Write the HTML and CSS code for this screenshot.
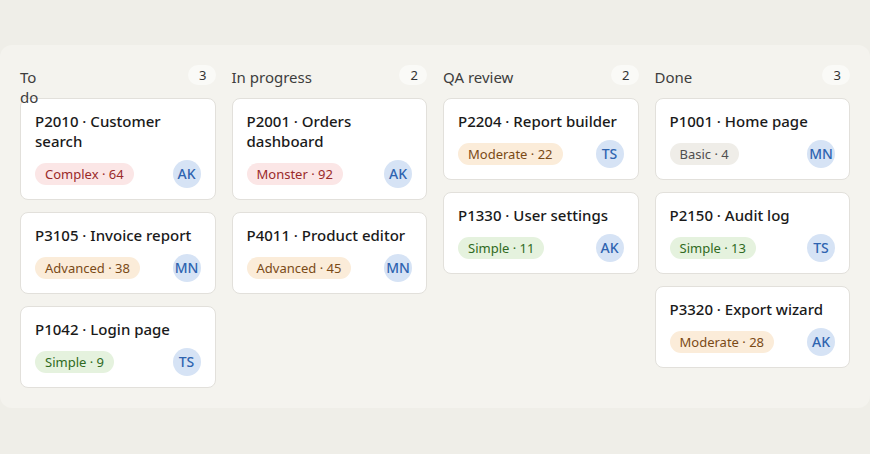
FILE: index.html
```html
<!DOCTYPE html>
<html>
<head>
  <meta name="viewport" content="width=device-width, initial-scale=1">
  <title>Board</title>
  <link rel="stylesheet" href="styles.css">
</head>
<body>
  <div class="board">
    <div class="column">
      <div class="col-head">
        <span class="col-title narrow">To do</span>
        <span class="count">3</span>
      </div>
      <div class="card">
        <div class="card-title">P2010 · Customer search</div>
        <div class="card-foot">
          <span class="tag red">Complex · 64</span>
          <span class="avatar">AK</span>
        </div>
      </div>
      <div class="card">
        <div class="card-title">P3105 · Invoice report</div>
        <div class="card-foot">
          <span class="tag orange">Advanced · 38</span>
          <span class="avatar">MN</span>
        </div>
      </div>
      <div class="card">
        <div class="card-title">P1042 · Login page</div>
        <div class="card-foot">
          <span class="tag green">Simple · 9</span>
          <span class="avatar">TS</span>
        </div>
      </div>
    </div>

    <div class="column">
      <div class="col-head">
        <span class="col-title">In progress</span>
        <span class="count">2</span>
      </div>
      <div class="card">
        <div class="card-title">P2001 · Orders dashboard</div>
        <div class="card-foot">
          <span class="tag red">Monster · 92</span>
          <span class="avatar">AK</span>
        </div>
      </div>
      <div class="card">
        <div class="card-title">P4011 · Product editor</div>
        <div class="card-foot">
          <span class="tag orange">Advanced · 45</span>
          <span class="avatar">MN</span>
        </div>
      </div>
    </div>

    <div class="column">
      <div class="col-head">
        <span class="col-title">QA review</span>
        <span class="count">2</span>
      </div>
      <div class="card">
        <div class="card-title">P2204 · Report builder</div>
        <div class="card-foot">
          <span class="tag orange">Moderate · 22</span>
          <span class="avatar">TS</span>
        </div>
      </div>
      <div class="card">
        <div class="card-title">P1330 · User settings</div>
        <div class="card-foot">
          <span class="tag green">Simple · 11</span>
          <span class="avatar">AK</span>
        </div>
      </div>
    </div>

    <div class="column">
      <div class="col-head">
        <span class="col-title">Done</span>
        <span class="count">3</span>
      </div>
      <div class="card">
        <div class="card-title">P1001 · Home page</div>
        <div class="card-foot">
          <span class="tag grey">Basic · 4</span>
          <span class="avatar">MN</span>
        </div>
      </div>
      <div class="card">
        <div class="card-title">P2150 · Audit log</div>
        <div class="card-foot">
          <span class="tag green">Simple · 13</span>
          <span class="avatar">TS</span>
        </div>
      </div>
      <div class="card">
        <div class="card-title">P3320 · Export wizard</div>
        <div class="card-foot">
          <span class="tag orange">Moderate · 28</span>
          <span class="avatar">AK</span>
        </div>
      </div>
    </div>
  </div>
</body>
</html>
```

FILE: styles.css
```css
html, body {
  height: 100%;
}

body {
  margin: 0;
  padding: 45px 0 0;
  background-color: #efeee8;
  font-family: "Noto Sans", "Open Sans", sans-serif;
  color: #1c1c1c;
  box-sizing: border-box;
}

.board {
  display: grid;
  grid-template-columns: repeat(4, 1fr);
  gap: 16px;
  align-items: start;
  padding: 20px;
  background-color: #f4f3ee;
  border-radius: 12px;
}

.column {
  display: flex;
  flex-direction: column;
  gap: 12px;
}

/* header text spills onto the first card, keep it on top */
.col-head {
  display: flex;
  align-items: flex-start;
  justify-content: space-between;
  height: 21px;
  position: relative;
  z-index: 1;
}

.col-title {
  padding-top: 2px;
  font-size: 15px;
  line-height: 20px;
  color: #3d3d3d;
}

/* the first heading breaks onto two lines in the original */
.col-title.narrow {
  width: 24px;
}

.count {
  min-width: 10px;
  height: 20px;
  padding: 0 9px;
  border-radius: 10px;
  background-color: #fafaf7;
  font-size: 13px;
  line-height: 20px;
  color: #333;
  text-align: right;
}

.card {
  padding: 12px 14px 11px;
  background-color: white;
  border: 1px solid #e2e0db;
  border-radius: 8px;
}

.card-title {
  font-size: 15px;
  font-weight: 500;
  line-height: 20px;
  color: #1a1a1a;
}

.card-foot {
  display: flex;
  align-items: center;
  justify-content: space-between;
  margin-top: 9px;
}

.tag {
  padding: 0 10px;
  height: 22px;
  line-height: 22px;
  border-radius: 11px;
  font-size: 13px;
}

.tag.red {
  background-color: #fbe6e6;
  color: #9a2a2a;
}

.tag.orange {
  background-color: #fbecd9;
  color: #7a4a16;
}

.tag.green {
  background-color: #e5f2de;
  color: #2f6a22;
}

.tag.grey {
  background-color: #efede8;
  color: #4f4f4f;
}

.avatar {
  width: 28px;
  height: 28px;
  border-radius: 50%;
  background-color: #d6e3f5;
  color: #2f64b0;
  font-size: 14px;
  font-weight: 500;
  line-height: 28px;
  text-align: center;
}
```
